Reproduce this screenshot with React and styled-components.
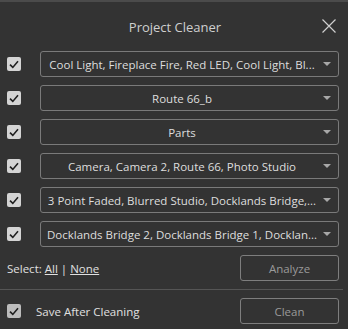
import React, { useState } from "react";
import styled, { createGlobalStyle } from "styled-components";

const GlobalStyle = createGlobalStyle`
  html, body {
    margin: 0;
    padding: 0;
    background: #333333;
  }
  * {
    box-sizing: border-box;
  }
`;

const Window = styled.div`
  width: 348px;
  height: 329px;
  background: #333333;
  border-top: 2px solid #4b4b4b;
  font-family: "Open Sans", "Noto Sans", sans-serif;
  color: #dcdcdc;
  display: flex;
  flex-direction: column;
`;

const Header = styled.div`
  height: 49px;
  position: relative;
  display: flex;
  align-items: center;
  justify-content: center;
`;

const Title = styled.div`
  font-size: 13px;
  color: #cfcfcf;
  margin-left: 2px;
`;

const CloseBtn = styled.div`
  position: absolute;
  right: 11px;
  top: 15px;
  width: 16px;
  height: 16px;
  cursor: pointer;
`;

const List = styled.div`
  display: flex;
  flex-direction: column;
  gap: 8px;
`;

const Row = styled.div`
  display: flex;
  align-items: center;
  height: 26px;
  padding-left: 7px;
`;

const CheckBox = styled.div`
  width: 14px;
  height: 14px;
  border-radius: 2px;
  background: ${(p) => (p.$dim ? "#bcbcbc" : "#d4d4d4")};
  display: flex;
  align-items: center;
  justify-content: center;
  flex-shrink: 0;
`;

const Select = styled.div`
  margin-left: 19px;
  width: 299px;
  height: 26px;
  border: 1px solid #7a7a7a;
  border-radius: 3px;
  display: flex;
  align-items: center;
  padding: 0 7px 0 4px;
`;

const SelectText = styled.div`
  flex: 1;
  text-align: center;
  font-size: 11.5px;
  white-space: nowrap;
  overflow: hidden;
  color: #dedede;
`;

const Arrow = styled.div`
  width: 0;
  height: 0;
  border-left: 4px solid transparent;
  border-right: 4px solid transparent;
  border-top: 4px solid #a8a8a8;
  margin-left: 4px;
  flex-shrink: 0;
`;

const FooterRow = styled.div`
  display: flex;
  align-items: center;
  justify-content: space-between;
  padding: 0 9px 0 7px;
  height: 26px;
`;

const SelectLinks = styled.div`
  font-size: 11.5px;
  color: #e0e0e0;
`;

const LinkText = styled.span`
  text-decoration: underline;
  cursor: pointer;
`;

const Button = styled.div`
  width: 99px;
  height: 26px;
  border: 1px solid #7e7e7e;
  border-radius: 3px;
  display: flex;
  align-items: center;
  justify-content: center;
  font-size: 11.5px;
  color: #9a9a9a;
`;

const Separator = styled.div`
  height: 1px;
  width: 343px;
  background: #555555;
  margin: 8px 0 8px 0;
`;

const SaveLabel = styled.div`
  display: flex;
  align-items: center;
  gap: 15px;
  font-size: 11.5px;
  color: #e0e0e0;
`;

const Check = () => (
  <svg width="10" height="9" viewBox="0 0 10 9">
    <path d="M1 4.6 L3.8 7.4 L9 1.2" fill="none" stroke="#1e1e1e" strokeWidth="1.6" />
  </svg>
);

const rows = [
  "Cool Light, Fireplace Fire, Red LED, Cool Light, Bl...",
  "Route 66_b",
  "Parts",
  "Camera, Camera 2, Route 66, Photo Studio",
  "3 Point Faded, Blurred Studio, Docklands Bridge,...",
  "Docklands Bridge 2, Docklands Bridge 1, Docklan...",
];

export default function App() {
  const [checked] = useState(rows.map(() => true));

  return (
    <>
      <GlobalStyle />
      <Window>
        <Header>
          <Title>Project Cleaner</Title>
          <CloseBtn>
            <svg width="16" height="16" viewBox="0 0 16 16">
              <path d="M1.5 1.5 L14.5 14.5 M14.5 1.5 L1.5 14.5" stroke="#cfcfcf" strokeWidth="1.2" />
            </svg>
          </CloseBtn>
        </Header>
        <List>
          {rows.map((text, i) => (
            <Row key={i}>
              <CheckBox>{checked[i] && <Check />}</CheckBox>
              <Select>
                <SelectText>{text}</SelectText>
                <Arrow />
              </Select>
            </Row>
          ))}
        </List>
        <FooterRow style={{ marginTop: 8 }}>
          <SelectLinks>
            Select: <LinkText>All</LinkText> | <LinkText>None</LinkText>
          </SelectLinks>
          <Button>Analyze</Button>
        </FooterRow>
        <Separator />
        <FooterRow>
          <SaveLabel>
            <CheckBox $dim>
              <Check />
            </CheckBox>
            Save After Cleaning
          </SaveLabel>
          <Button>Clean</Button>
        </FooterRow>
      </Window>
    </>
  );
}
